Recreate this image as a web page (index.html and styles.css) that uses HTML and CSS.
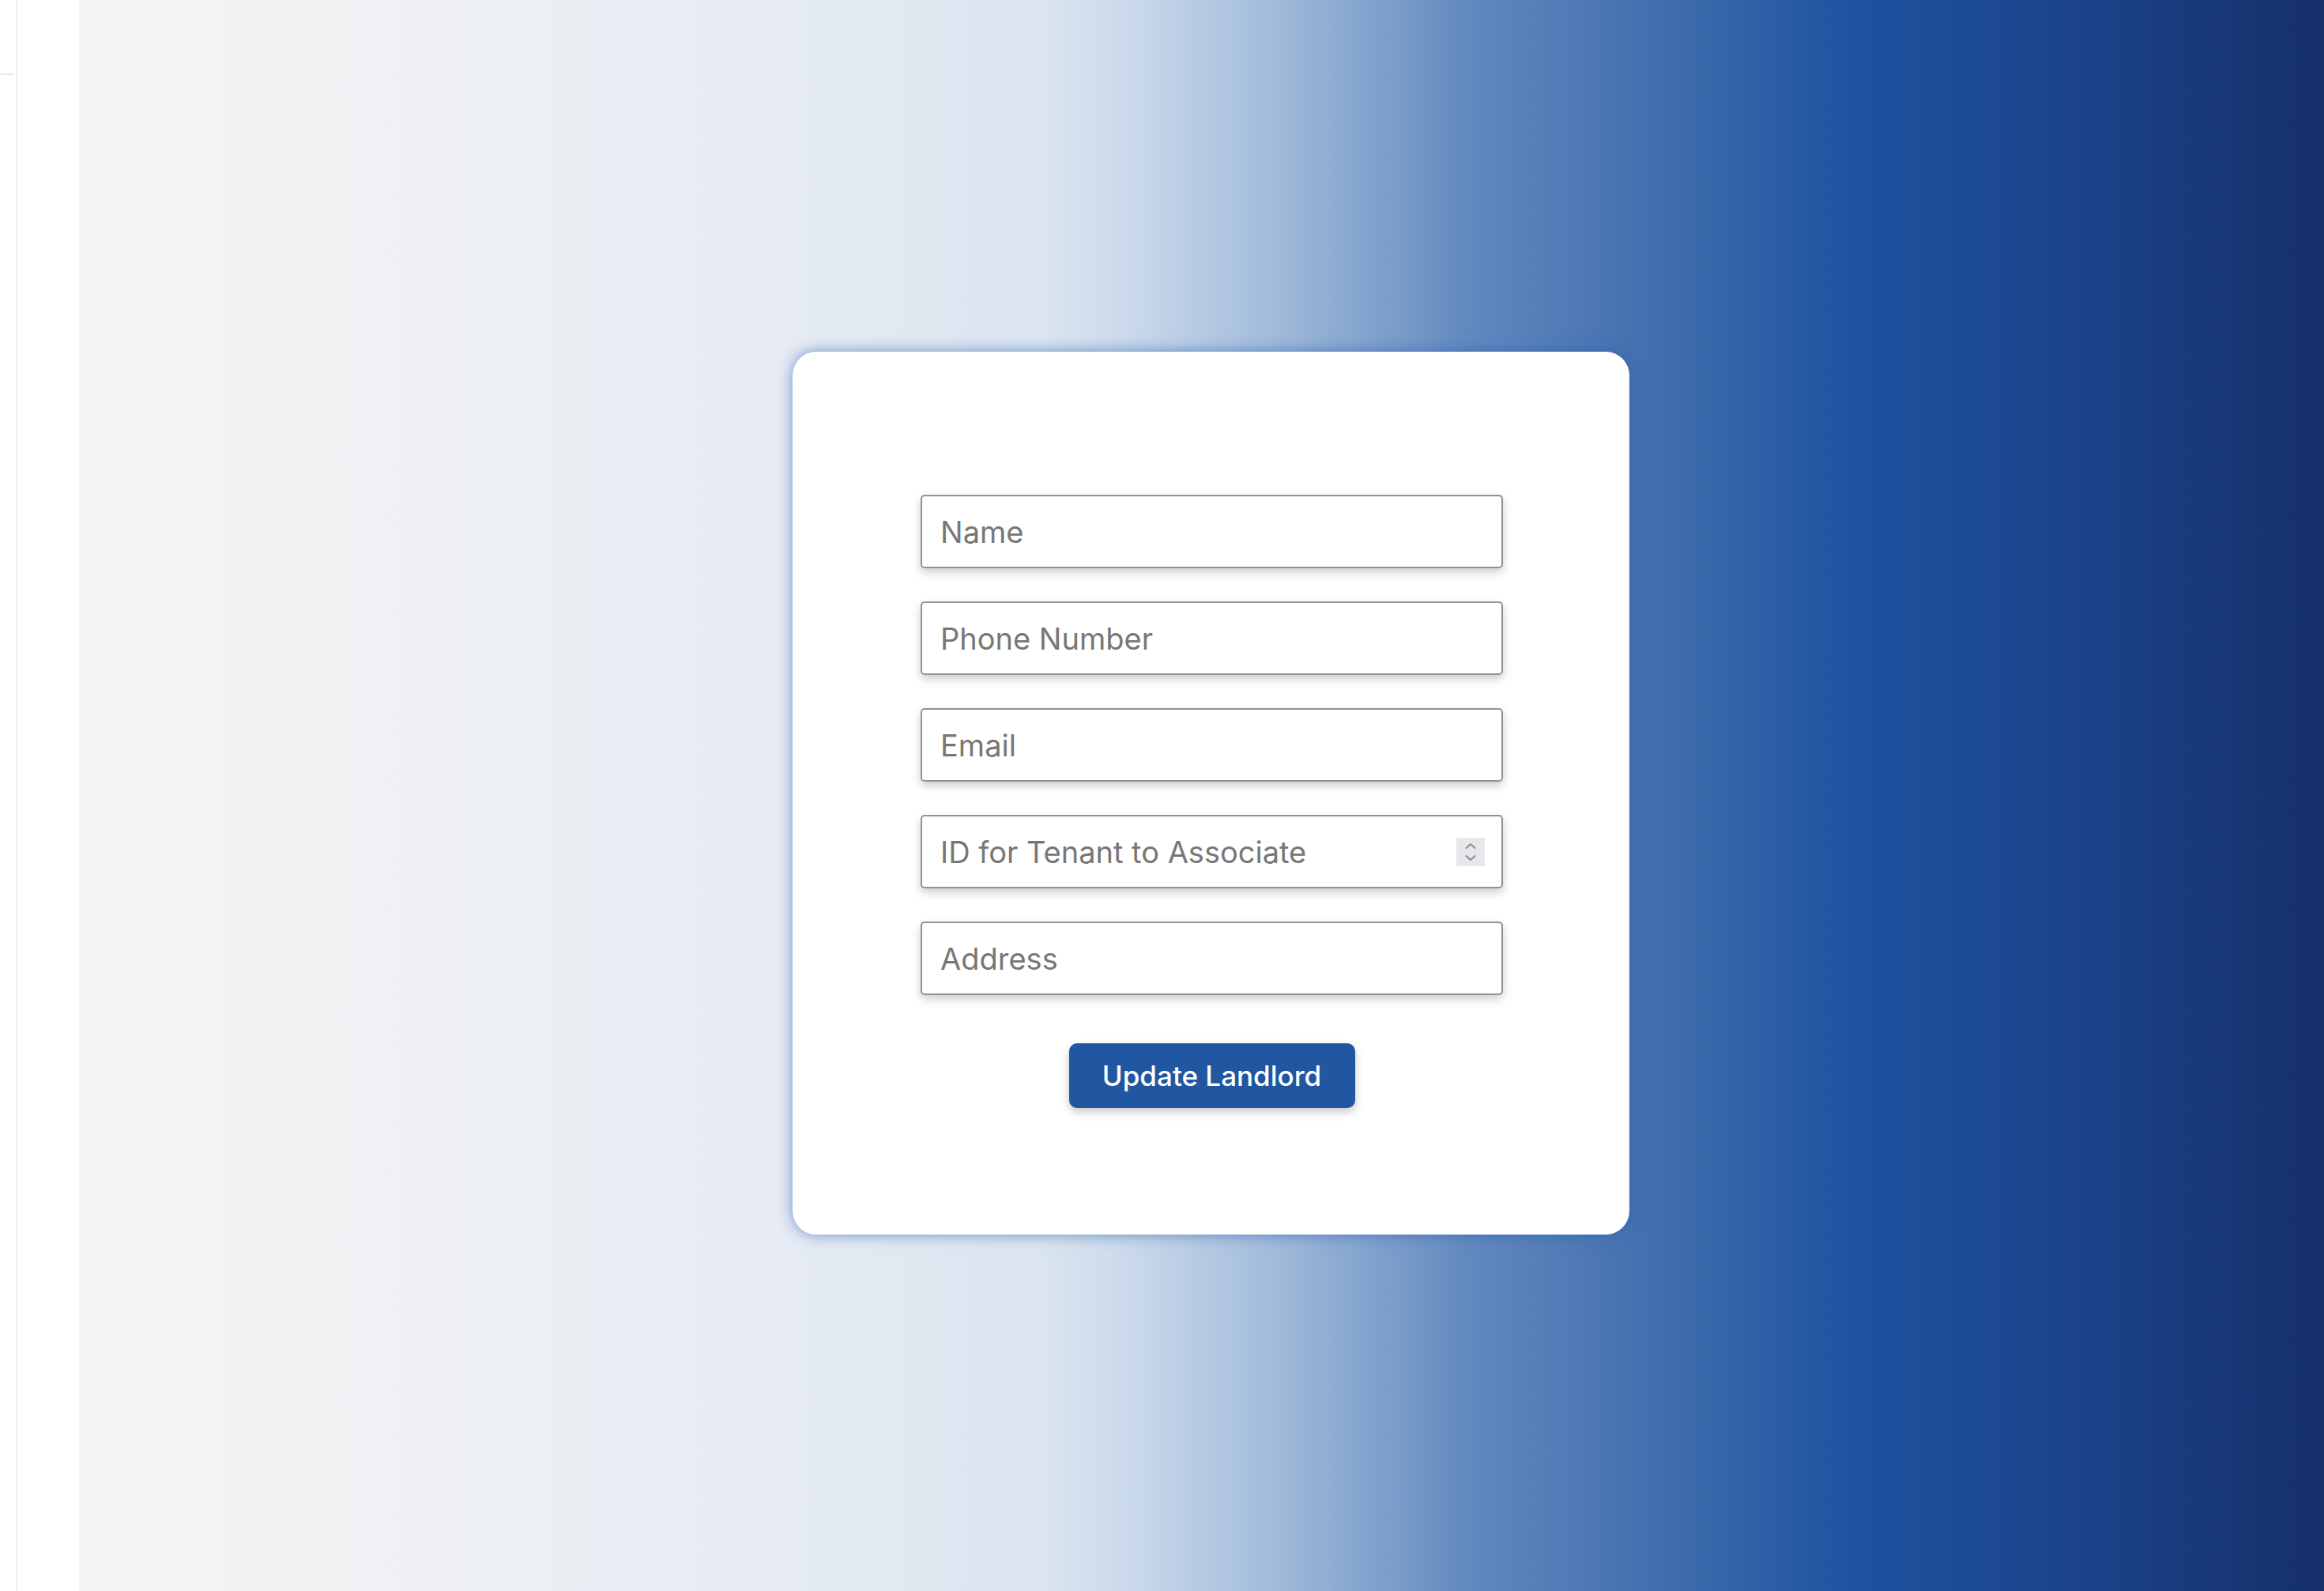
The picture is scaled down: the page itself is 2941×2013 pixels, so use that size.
FILE: index.html
```html
<!DOCTYPE html>
<html lang="en">
<head>
  <meta charset="UTF-8">
  <title>Update Landlord</title>
  <meta name="viewport" content="width=device-width, initial-scale=1">
  <link rel="stylesheet" href="styles.css">
</head>
<body>

  <aside class="sidebar">
    <div class="rail">
      <div class="rail-stub"></div>
    </div>
  </aside>

  <main class="main">
    <form class="landlord-card">
      <input class="field" type="text" placeholder="Name">
      <input class="field" type="text" placeholder="Phone Number">
      <input class="field" type="email" placeholder="Email">

      <label class="field field-number">
        <input type="text" placeholder="ID for Tenant to Associate">
        <svg class="spinner" width="36" height="36" viewBox="0 0 36 36">
          <rect width="36" height="36" fill="#e7e7ec"/>
          <path d="M12.5 13 L18 8 L23.5 13" fill="none" stroke="#8c8c93" stroke-width="2" stroke-linecap="round" stroke-linejoin="round"/>
          <path d="M12.5 23 L18 28 L23.5 23" fill="none" stroke="#8c8c93" stroke-width="2" stroke-linecap="round" stroke-linejoin="round"/>
        </svg>
      </label>

      <input class="field" type="text" placeholder="Address">

      <button type="button" class="update-btn">Update Landlord</button>
    </form>
  </main>

</body>
</html>
```

FILE: styles.css
```css
body {
  margin: 0;
  display: flex;
  min-height: 2013px;
  font-family: Inter, 'Liberation Sans', sans-serif;
  background: #fff;
}

.sidebar {
  width: 100px;
  flex-shrink: 0;
  display: flex;
  background: #fff;
}

.rail {
  width: 21px;
  border-right: 1px solid #e2e2e2;
}

.rail-stub {
  margin-top: 93px;
  width: 18px;
  height: 2px;
  background: #e6e6e6;
}

.main {
  flex: 1;
  display: flex;
  align-items: center;
  justify-content: center;
  padding: 0 0 6px 24px;
  background: linear-gradient(to right,
    #f5f5f5 0%,
    #eef0f3 16%,
    #e6ebf4 31%,
    #dae5ef 43%,
    #c9d8ea 47%,
    #a3bcdb 53%,
    #6189bf 62%,
    #4672b0 69%,
    #1e53a0 79%,
    #1b438a 89%,
    #16306a 100%);
}

.landlord-card {
  width: 737px;
  padding: 181px 160px 160px 162px;
  background: #fff;
  border-radius: 30px;
  box-shadow: 0 0 18px rgba(45, 95, 175, 0.65);
  display: flex;
  flex-direction: column;
  align-items: center;
  gap: 42px;
}

.field {
  box-sizing: border-box;
  width: 737px;
  height: 93px;
  padding: 0 23px;
  border: 2px solid #919197;
  border-radius: 5px;
  background: #fff;
  box-shadow: 0 5px 12px rgba(0, 0, 0, 0.2);
  font-family: Inter, 'Liberation Sans', sans-serif;
  font-size: 38px;
  color: #333;
  outline: none;
}

.field::placeholder {
  color: #777;
}

.field-number {
  display: flex;
  align-items: center;
  gap: 12px;
  padding-right: 21px;
}

.field-number input {
  flex: 1;
  min-width: 0;
  border: none;
  padding: 0;
  font: inherit;
  color: inherit;
  outline: none;
  background: transparent;
}

.field-number input::placeholder {
  color: #777;
}

.spinner {
  flex-shrink: 0;
}

.update-btn {
  margin-top: 19px;
  width: 362px;
  height: 82px;
  border: none;
  border-radius: 10px;
  background: #2057a0;
  color: #fff;
  font-family: Inter, 'Liberation Sans', sans-serif;
  font-size: 35px;
  font-weight: 500;
  box-shadow: 0 5px 12px rgba(0, 0, 0, 0.22);
  cursor: pointer;
}

.update-btn:hover {
  background: #1a4a8a;
}
```
